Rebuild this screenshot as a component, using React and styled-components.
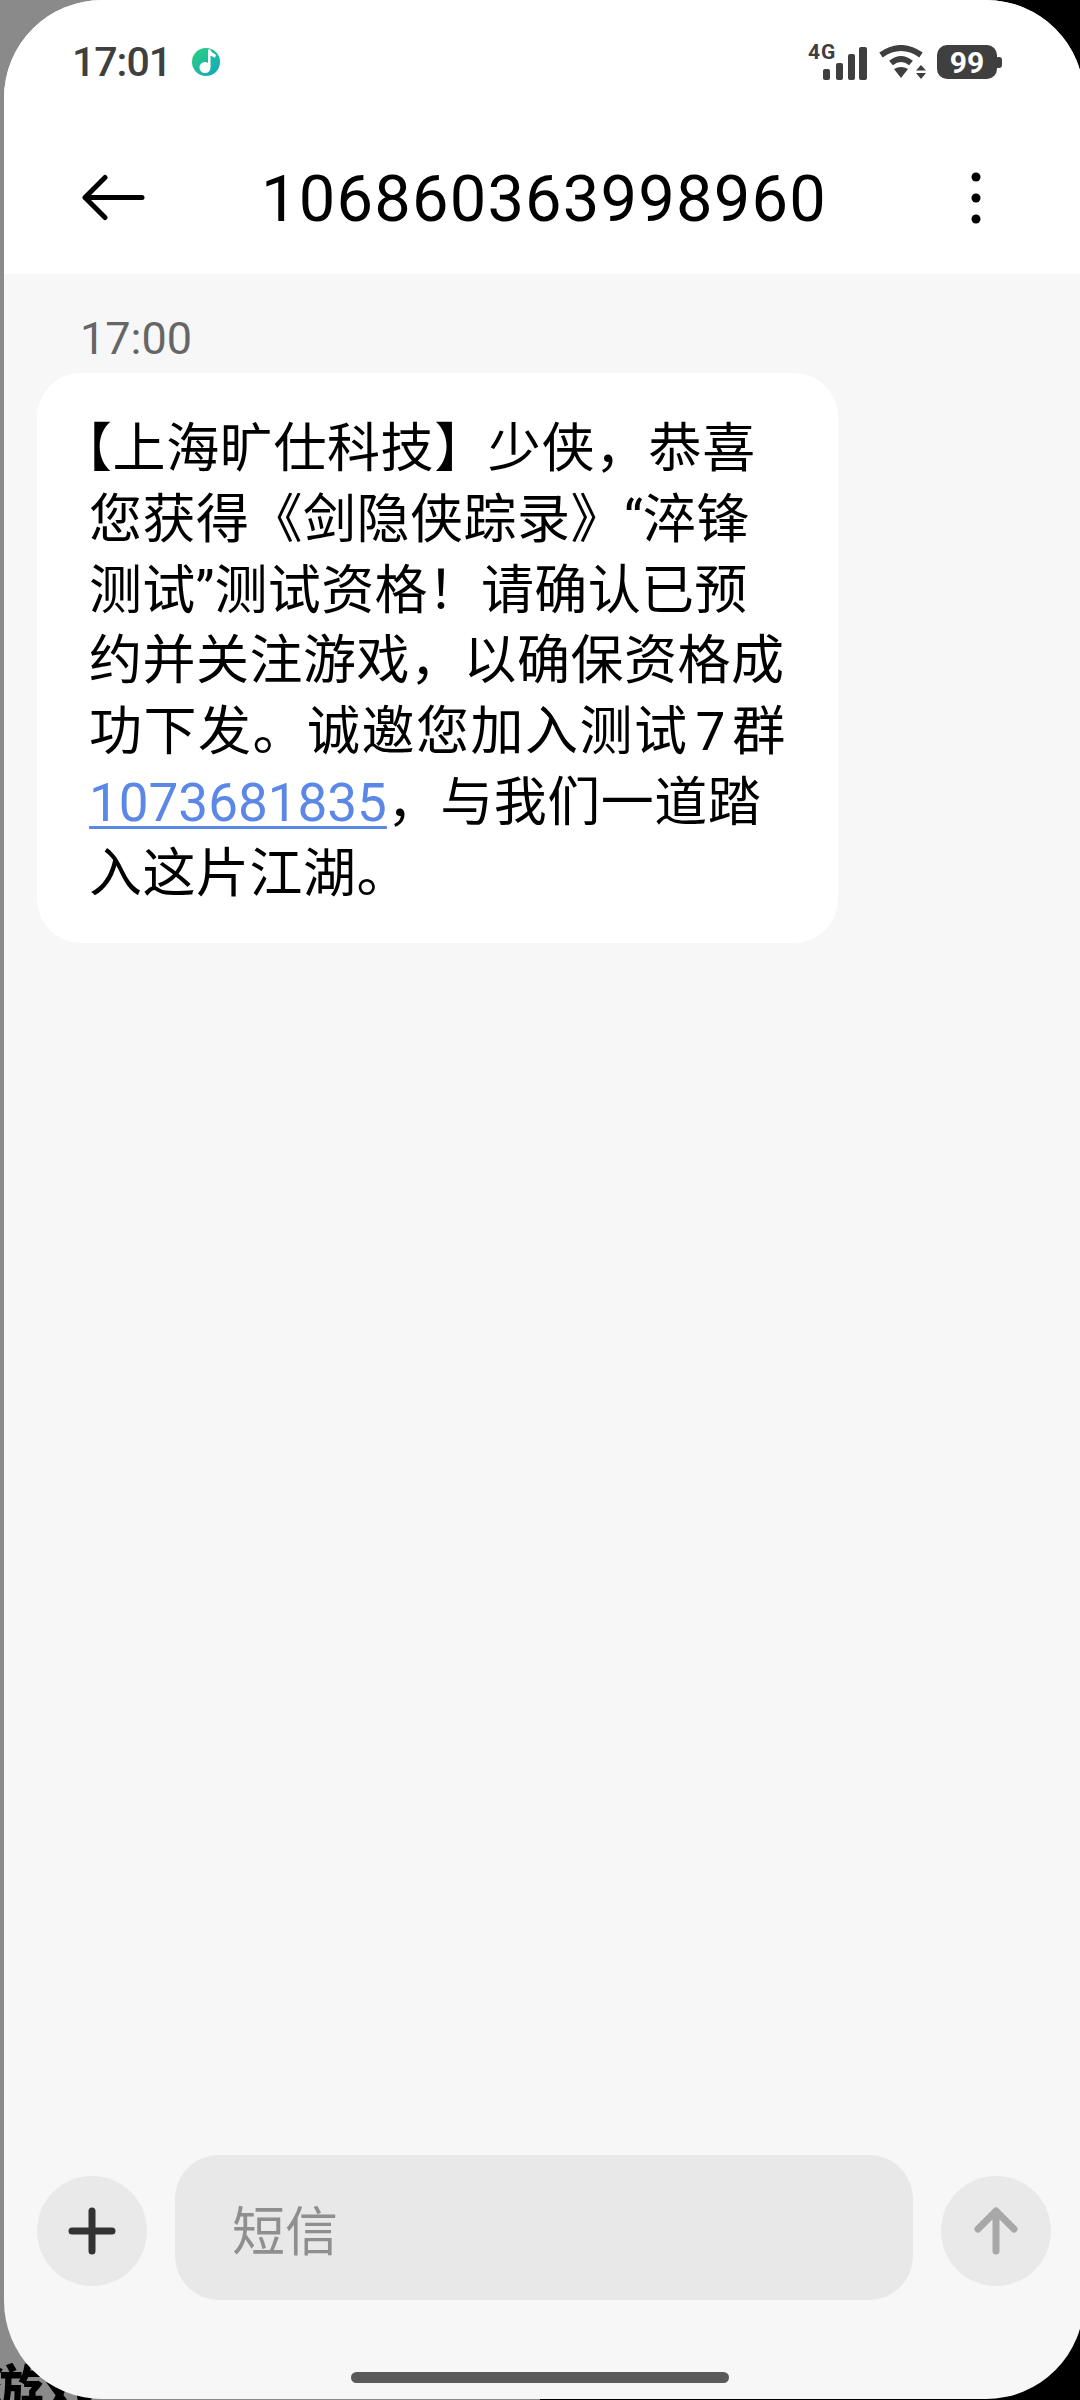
import React from 'react'
import styled, { createGlobalStyle } from 'styled-components'

const GlobalStyle = createGlobalStyle`
  html, body {
    margin: 0;
    padding: 0;
    background: #000;
  }
`

const Backdrop = styled.div`
  position: relative;
  width: 1080px;
  height: 2400px;
  overflow: hidden;
  background: linear-gradient(90deg, #8a8a8a 0, #8a8a8a 50%, #000 50%, #000 100%);
  font-family: Roboto, "Noto Sans CJK SC", sans-serif;
`

const BehindText = styled.div`
  position: absolute;
  left: -14px;
  top: 2358px;
  font-size: 58px;
  font-weight: 700;
  line-height: 60px;
  color: #000;
  font-family: "Noto Sans CJK SC", sans-serif;
`

const Screen = styled.div`
  position: relative;
  width: 1080px;
  height: 2399px;
  margin-left: 4px;
  display: flex;
  flex-direction: column;
  background: #f7f7f7;
  border-radius: 98px;
  overflow: hidden;
`

const Header = styled.header`
  height: 274px;
  flex: none;
  background: #fff;
  display: flex;
  flex-direction: column;
`

const StatusBar = styled.div`
  height: 124px;
  display: flex;
  align-items: center;
  justify-content: space-between;
  padding: 0 82px 0 68px;
`

const StatusLeft = styled.div`
  display: flex;
  align-items: center;
  gap: 21px;
`

const Clock = styled.span`
  font-size: 41px;
  font-weight: 500;
  letter-spacing: -1px;
  color: #3f3f3f;
`

const StatusRight = styled.div`
  display: flex;
  align-items: center;
  gap: 11px;
`

const TitleBar = styled.div`
  height: 150px;
  display: flex;
  align-items: center;
  padding: 0 0 0 76px;
`

const Title = styled.h1`
  margin: 0 144px 0 113px;
  font-size: 65px;
  font-weight: 400;
  color: #000;
  letter-spacing: 1.2px;
`

const Thread = styled.main`
  flex: 1;
  padding: 0 0 0 33px;
`

const Stamp = styled.div`
  margin: 40px 0 0 43px;
  font-size: 45px;
  line-height: 50px;
  color: #666;
`

const Bubble = styled.div`
  box-sizing: border-box;
  width: 801px;
  height: 570px;
  margin-top: 9px;
  padding: 36px 0 0 52px;
  background: #fff;
  border-radius: 44px;
  font-size: 53px;
  line-height: 70.8px;
  color: #000;
  font-family: "Noto Sans CJK SC", sans-serif;
`

const Line = styled.div`
  height: 70.8px;
  white-space: nowrap;
  letter-spacing: ${props => props.$spacing || 0}px;
`

const Bracket = styled.span`
  margin-left: -30px;
`

const Quote = styled.span`
  font-family: Roboto, sans-serif;
  letter-spacing: 0;
`

const Digit = styled.span`
  margin: 0 7px;
  font-family: Roboto, sans-serif;
  letter-spacing: 0;
`

const LinkNumber = styled.a`
  color: #5b87e6;
  font-family: Roboto, sans-serif;
  letter-spacing: 0;
  text-decoration: underline;
  text-underline-offset: 5px;
  text-decoration-thickness: 3px;
`

const Composer = styled.div`
  height: 145px;
  flex: none;
  display: flex;
  align-items: flex-end;
  padding: 0 33px;
`

const RoundButton = styled.div`
  width: 110px;
  height: 110px;
  flex: none;
  margin-bottom: 14px;
  border-radius: 50%;
  background: #e9e9e9;
  display: flex;
  align-items: center;
  justify-content: center;
`

const Field = styled.div`
  flex: 1;
  height: 145px;
  margin: 0 28px;
  box-sizing: border-box;
  padding-left: 57px;
  display: flex;
  align-items: center;
  background: #e8e8e8;
  border-radius: 44px;
  font-size: 53px;
  color: #8f8f8f;
  font-family: "Noto Sans CJK SC", sans-serif;
`

const HomeZone = styled.div`
  height: 99px;
  flex: none;
  display: flex;
  justify-content: center;
  padding-right: 8px;
`

const HomeBar = styled.div`
  width: 378px;
  height: 11px;
  margin-top: 72px;
  border-radius: 6px;
  background: #5a5a5a;
`

const MusicIcon = () => (
  <svg width="28" height="28" viewBox="0 0 28 28">
    <defs>
      <linearGradient id="mus" x1="0" y1="0" x2="1" y2="1">
        <stop offset="0" stopColor="#2bd27f" />
        <stop offset="1" stopColor="#12a5c0" />
      </linearGradient>
    </defs>
    <circle cx="14" cy="14" r="14" fill="url(#mus)" />
    <circle cx="13" cy="19.5" r="5.5" fill="#fff" />
    <path d="M16 1.5 L18.5 1.5 C19 5 22 5 24 7 L23 10 C21 8.5 19.5 8 18.5 8 L18.5 19 L16 19 Z" fill="#fff" />
  </svg>
)

const SignalIcon = () => (
  <svg width="59" height="37" viewBox="0 0 59 37">
    <text x="0" y="15" fontFamily="Roboto, sans-serif" fontWeight="700" fontSize="21" letterSpacing="1" fill="#3f3f3f">4G</text>
    <rect x="15" y="25" width="7" height="11" rx="2" fill="#3f3f3f" />
    <rect x="28" y="19" width="7" height="17" rx="2" fill="#3f3f3f" />
    <rect x="40" y="10" width="7" height="26" rx="2" fill="#3f3f3f" />
    <rect x="51" y="3" width="8" height="33" rx="2" fill="#3f3f3f" />
  </svg>
)

const WifiIcon = () => (
  <svg width="48" height="34" viewBox="0 0 48 34">
    <path d="M3 10 Q23 -4 43 10" fill="none" stroke="#3f3f3f" strokeWidth="6" />
    <path d="M13 18 Q23 10 33 18" fill="none" stroke="#3f3f3f" strokeWidth="6" />
    <path d="M16 24 Q23 20 30 24 L23 33 Z" fill="#3f3f3f" />
    <path d="M38 25.5 L43 20 L48 25.5 Z M38 28 L48 28 L43 34 Z" fill="#3f3f3f" />
  </svg>
)

const BatteryIcon = () => (
  <svg width="65" height="34" viewBox="0 0 65 34">
    <rect x="0" y="0" width="60" height="34" rx="10" fill="#3f3f3f" />
    <rect x="58" y="12" width="7" height="11" rx="3" fill="#3f3f3f" />
    <text x="30" y="28" textAnchor="middle" fontFamily="Roboto, sans-serif" fontWeight="700" fontSize="30" fill="#fff">99</text>
  </svg>
)

const BackIcon = () => (
  <svg width="68" height="50" viewBox="0 0 68 50">
    <path d="M25 3.5 L5 23.5 L25 43.5 M5 23.5 L62 23.5" fill="none" stroke="#000" strokeWidth="5" strokeLinecap="round" strokeLinejoin="round" />
  </svg>
)

const DotsIcon = () => (
  <svg width="10" height="54" viewBox="0 0 10 54">
    <circle cx="5" cy="5" r="4.5" fill="#000" />
    <circle cx="5" cy="26" r="4.5" fill="#000" />
    <circle cx="5" cy="47" r="4.5" fill="#000" />
  </svg>
)

const PlusIcon = () => (
  <svg width="48" height="48" viewBox="0 0 48 48">
    <path d="M24 4 L24 44 M4 24 L44 24" fill="none" stroke="#333" strokeWidth="7" strokeLinecap="round" />
  </svg>
)

const SendIcon = () => (
  <svg width="44" height="48" viewBox="0 0 44 48">
    <path d="M22 44 L22 4 M4 22 L22 4 L40 22" fill="none" stroke="#a8a8a8" strokeWidth="7" strokeLinecap="round" strokeLinejoin="round" />
  </svg>
)

const App = () => (
  <Backdrop>
    <GlobalStyle />
    <BehindText>游戏</BehindText>
    <Screen>
      <Header>
        <StatusBar>
          <StatusLeft>
            <Clock>17:01</Clock>
            <MusicIcon />
          </StatusLeft>
          <StatusRight>
            <SignalIcon />
            <WifiIcon />
            <BatteryIcon />
          </StatusRight>
        </StatusBar>
        <TitleBar>
          <BackIcon />
          <Title>106860363998960</Title>
          <DotsIcon />
        </TitleBar>
      </Header>
      <Thread>
        <Stamp>17:00</Stamp>
        <Bubble>
          <Line $spacing={0.6}><Bracket>【</Bracket>上海旷仕科技】少侠，恭喜</Line>
          <Line $spacing={0.5}>您获得《剑隐侠踪录》<Quote>“</Quote>淬锋</Line>
          <Line $spacing={0.3}>测试<Quote>”</Quote>测试资格！请确认已预</Line>
          <Line $spacing={0.5}>约并关注游戏，以确保资格成</Line>
          <Line $spacing={1.5}>功下发。诚邀您加入测试<Digit>7</Digit>群</Line>
          <Line $spacing={0.5}><LinkNumber>1073681835</LinkNumber>，与我们一道踏</Line>
          <Line $spacing={0.5}>入这片江湖。</Line>
        </Bubble>
      </Thread>
      <Composer>
        <RoundButton><PlusIcon /></RoundButton>
        <Field>短信</Field>
        <RoundButton><SendIcon /></RoundButton>
      </Composer>
      <HomeZone>
        <HomeBar />
      </HomeZone>
    </Screen>
  </Backdrop>
)

export default App
